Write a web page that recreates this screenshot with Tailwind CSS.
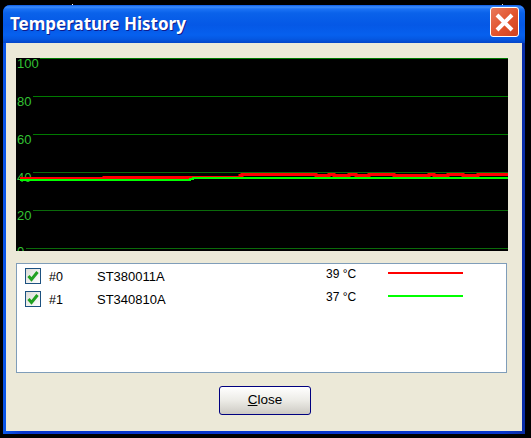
<!DOCTYPE html>
<html><head><meta charset="utf-8"><script src="https://cdn.jsdelivr.net/npm/@tailwindcss/browser@4"></script></head>
<body class="relative bg-black w-[531px] h-[438px] overflow-hidden font-['Noto_Sans','Liberation_Sans',sans-serif]">
<span class="absolute left-[72px] top-[4px] w-[1px] h-[1px] bg-white"></span>
<span class="absolute left-[502px] top-[4px] w-[1px] h-[1px] bg-[#e8d8c0]"></span>
<div class="ml-[3px] pt-[5px] w-[522px]">
  <div class="h-[429px] flex flex-col rounded-t-[7px] overflow-hidden bg-[linear-gradient(to_right,#0a55e8_0px,#0a55e8_3px,#0835cc_20px,#0835cc_500px,#0a2ea8_519px,#0a2ea8_522px)]">
    <div class="h-[38px] shrink-0 flex items-center justify-between pl-[7px] pr-[6px] bg-[linear-gradient(to_bottom,#0a5ae6_0px,#3d8dfb_2px,#1b72f5_4px,#0a62ea_8px,#0558e6_20px,#0660ee_30px,#0558e2_34px,#0445c8_38px)]">
      <span class="text-[17px] leading-[24px] font-bold text-white [text-shadow:1px_1px_#0f1a89] font-['Noto_Sans',sans-serif]">Temperature History</span>
      <div class="w-[29px] h-[30px] -mt-[4px] rounded-[3px] border border-white bg-[linear-gradient(135deg,#e87a5c,#e2532c_55%,#cf4320)] flex items-center justify-center">
        <svg width="21" height="21" viewBox="0 0 21 21"><path d="M3 3 L18 18 M18 3 L3 18" stroke="#fff" stroke-width="4" fill="none"/></svg>
      </div>
    </div>
    <div class="flex-1 mx-[3px] mb-[3px] bg-[#ece9d8] pl-[10px] pr-[14px] pt-[15px] flex flex-col">
      <svg class="block shrink-0" width="492" height="193" viewBox="0 0 492 193" font-family="'Liberation Sans',sans-serif" font-size="13" fill="#33c233">
        <rect width="492" height="193" fill="#000"/>
        <g shape-rendering="crispEdges" stroke="#007a00" stroke-width="1">
          <path d="M24 .5H492"/><path d="M17 38.5H492"/><path d="M17 76.5H492"/><path d="M17 114.5H492" stroke="#0a6a0a"/><path d="M17 152.5H492" stroke="#0a6a0a"/><path d="M10 190.5H492" stroke="#0a6a0a"/>
        </g>
        <text x="1" y="10">100</text><text x="1" y="48">80</text><text x="1" y="86">60</text><text x="1" y="124">40</text><text x="1" y="162">20</text><text x="1" y="198">0</text>
        <g fill="none">
          <path stroke="#ff0000" stroke-width="3" d="M4 120.5H88V119.5H224V117.5H226V116.5H300V117.5H313V116.5H318V117.5H333V116.5H340V117.5H353V116.5H378V117.5H413V116.5H418V117.5H432V116.5H447V117.5H462V116.5H492"/>
          <path stroke="#00ff00" stroke-width="2" d="M4 122H174V121H177V120H492"/>
        </g>
      </svg>
      <div class="relative mt-[12px] w-[491px] h-[110px] border border-[#7f9db9] bg-white text-[12px] text-black font-['Liberation_Sans',sans-serif] shrink-0 pt-[4px]">
        <div class="h-[23px] flex items-start">
          <span class="ml-[8px] mr-[8px] w-[16px] h-[16px] border border-[#1c5180] bg-[linear-gradient(135deg,#dcdcd7,#ffffff)] flex items-center justify-center"><svg width="12" height="12" viewBox="0 0 12 12"><path d="M1.5 6 L4.5 9.5 L10.5 2" stroke="#21a121" stroke-width="3" fill="none"/></svg></span>
          <span class="w-[48px] leading-[18px] text-[12.5px]">#0</span><span class="w-[229px] leading-[18px] text-[13px]">ST380011A</span><span class="w-[62px] leading-[12px]">39 °C</span>
          <span class="w-[75px] h-[2px] mt-[4px] bg-[#ff0000]"></span>
        </div>
        <div class="h-[23px] flex items-start">
          <span class="ml-[8px] mr-[8px] w-[16px] h-[16px] border border-[#1c5180] bg-[linear-gradient(135deg,#dcdcd7,#ffffff)] flex items-center justify-center"><svg width="12" height="12" viewBox="0 0 12 12"><path d="M1.5 6 L4.5 9.5 L10.5 2" stroke="#21a121" stroke-width="3" fill="none"/></svg></span>
          <span class="w-[48px] leading-[18px] text-[12.5px]">#1</span><span class="w-[229px] leading-[18px] text-[13px]">ST340810A</span><span class="w-[62px] leading-[12px]">37 °C</span>
          <span class="w-[75px] h-[2px] mt-[4px] bg-[#00ff00]"></span>
        </div>
      </div>
      <div class="flex justify-center mt-[13px] pl-[6px]">
        <button class="w-[92px] h-[29px] rounded-[3px] border border-[#000080] bg-[linear-gradient(to_bottom,#ffffff,#ecebe6_50%,#cdcac3)] text-[13.5px] text-black font-['Liberation_Sans',sans-serif]"><span class="underline">C</span>lose</button>
      </div>
    </div>
  </div>
</div>
</body></html>
